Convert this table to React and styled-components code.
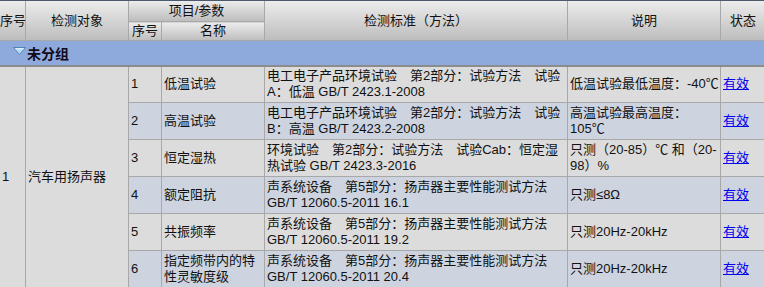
import React from 'react';
import styled, { createGlobalStyle } from 'styled-components';

const GlobalStyle = createGlobalStyle`
  html, body {
    margin: 0;
    padding: 0;
    background: #ffffff;
    overflow: hidden;
  }
  body {
    font-family: "Liberation Sans", "Noto Sans CJK SC", sans-serif;
    font-size: 13px;
    color: #111;
  }
`;

const Wrap = styled.div`
  width: 764px;
  height: 287px;
  overflow: hidden;
  border-top: 1px solid #4c5a6e;
  box-sizing: border-box;
`;

const Table = styled.table`
  border-collapse: collapse;
  table-layout: fixed;
  width: 790px;
  margin-left: -1px;
`;

const Th = styled.th`
  font-weight: normal;
  height: ${({ h }) => h || 19}px;
  padding: 0;
  border: 1px solid #a8a8a8;
  border-top: none;
  background: linear-gradient(#ececec, #bdbdbd);
  text-align: ${({ left }) => (left ? 'left' : 'center')};
  padding-left: ${({ left }) => (left ? '9px' : '0')};
  vertical-align: middle;
  line-height: 16px;
  white-space: nowrap;
`;

const GroupRow = styled.tr`
  background: #8eaadc;
  height: 25px;
  td {
    border: 1px solid #8eaadc;
    border-bottom: 2px solid #8c8c8c;
    padding: 0 0 0 13px;
    vertical-align: middle;
  }
`;

const GroupLabel = styled.span`
  display: inline-flex;
  align-items: center;
  font-weight: bold;
  font-size: 14px;
  color: #120a18;
  svg {
    margin-right: 1px;
    margin-top: -3px;
  }
`;

const Row = styled.tr`
  height: 37px;
  background: ${({ shade }) => (shade ? '#cdd4e0' : '#dcdcdc')};
`;

const Td = styled.td`
  border: 1px solid #a8a8a8;
  padding: 0 2px;
  vertical-align: middle;
  line-height: 16px;
  white-space: nowrap;
  overflow: hidden;
  background: ${({ plain }) => (plain ? '#dcdcdc' : 'transparent')};
`;

const StatusLink = styled.a`
  color: #0000ee;
  text-decoration: underline;
  cursor: pointer;
`;

const items = [
  {
    name: ['低温试验'],
    std: ['电工电子产品环境试验\u3000第2部分：试验方法\u3000试验', 'A：低温 GB/T 2423.1-2008'],
    note: ['低温试验最低温度：-40℃'],
  },
  {
    name: ['高温试验'],
    std: ['电工电子产品环境试验\u3000第2部分：试验方法\u3000试验', 'B：高温 GB/T 2423.2-2008'],
    note: ['高温试验最高温度：', '105℃'],
  },
  {
    name: ['恒定湿热'],
    std: ['环境试验\u3000第2部分：试验方法\u3000试验Cab：恒定湿', '热试验 GB/T 2423.3-2016'],
    note: ['只测（20-85）℃ 和（20-', '98）%'],
  },
  {
    name: ['额定阻抗'],
    std: ['声系统设备\u3000第5部分：扬声器主要性能测试方法', 'GB/T 12060.5-2011 16.1'],
    note: ['只测≤8Ω'],
  },
  {
    name: ['共振频率'],
    std: ['声系统设备\u3000第5部分：扬声器主要性能测试方法', 'GB/T 12060.5-2011 19.2'],
    note: ['只测20Hz-20kHz'],
  },
  {
    name: ['指定频带内的特', '性灵敏度级'],
    std: ['声系统设备\u3000第5部分：扬声器主要性能测试方法', 'GB/T 12060.5-2011 20.4'],
    note: ['只测20Hz-20kHz'],
  },
];

const Lines = ({ lines }) =>
  lines.map((line, i) => (
    <React.Fragment key={i}>
      {i > 0 && <br />}
      {line}
    </React.Fragment>
  ));

const Caret = () => (
  <svg width="13" height="8" viewBox="0 0 13 8">
    <path d="M0.5 0.5 H12.5 L6.5 7.5 Z" fill="#b9dcf4" stroke="#4f86b8" strokeWidth="1" />
    <path d="M2.5 1.8 H10.5" stroke="#e8f5fd" strokeWidth="1" />
  </svg>
);

export default function App() {
  return (
    <>
      <GlobalStyle />
      <Wrap>
        <Table>
          <colgroup>
            <col style={{ width: 26 }} />
            <col style={{ width: 103 }} />
            <col style={{ width: 33 }} />
            <col style={{ width: 103 }} />
            <col style={{ width: 303 }} />
            <col style={{ width: 153 }} />
            <col style={{ width: 69 }} />
          </colgroup>
          <thead>
            <tr>
              <Th rowSpan={2}>序号</Th>
              <Th rowSpan={2}>检测对象</Th>
              <Th colSpan={2} h={20}>项目/参数</Th>
              <Th rowSpan={2}>检测标准（方法）</Th>
              <Th rowSpan={2}>说明</Th>
              <Th rowSpan={2} left>状态</Th>
            </tr>
            <tr>
              <Th h={18}>序号</Th>
              <Th h={18}>名称</Th>
            </tr>
          </thead>
          <tbody>
            <GroupRow>
              <td colSpan={7}>
                <GroupLabel>
                  <Caret />
                  未分组
                </GroupLabel>
              </td>
            </GroupRow>
            {items.map((item, i) => (
              <Row key={i} shade={i % 2 === 1}>
                {i === 0 && (
                  <>
                    <Td plain rowSpan={items.length}>1</Td>
                    <Td plain rowSpan={items.length}>汽车用扬声器</Td>
                  </>
                )}
                <Td>{i + 1}</Td>
                <Td><Lines lines={item.name} /></Td>
                <Td><Lines lines={item.std} /></Td>
                <Td><Lines lines={item.note} /></Td>
                <Td><StatusLink>有效</StatusLink></Td>
              </Row>
            ))}
          </tbody>
        </Table>
      </Wrap>
    </>
  );
}
